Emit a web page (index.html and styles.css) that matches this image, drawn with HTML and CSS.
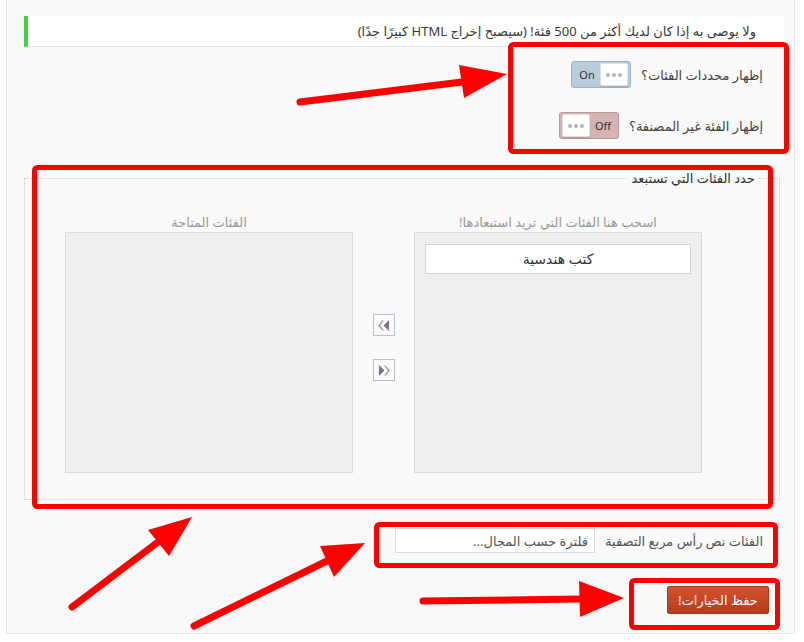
FILE: index.html
```html
<!DOCTYPE html>
<html lang="ar" dir="rtl">
<head>
    <meta charset="UTF-8">
    <meta name="viewport" content="width=device-width, initial-scale=1.0">
    <title>خيارات الفئات</title>
    <link rel="stylesheet" href="styles.css">
</head>
<body>
    <div class="panel">
        <div class="notice">ولا يوصى به إذا كان لديك أكثر من 500 فئة! (سيصبح إخراج HTML كبيرًا جدًا)</div>

        <div class="switches">
            <div class="switch-row">
                <label>إظهار محددات الفئات؟</label>
                <span class="toggle on"><span class="toggle-text">On</span><span class="knob"></span></span>
            </div>
            <div class="switch-row">
                <label>إظهار الفئة غير المصنفة؟</label>
                <span class="toggle off"><span class="knob"></span><span class="toggle-text">Off</span></span>
            </div>
        </div>

        <fieldset class="exclude">
            <legend>حدد الفئات التي تستبعد</legend>
            <div class="lists">
                <div class="list-title">اسحب هنا الفئات التي تريد استبعادها!</div>
                <div></div>
                <div class="list-title">الفئات المتاحة</div>

                <div class="list-box">
                    <div class="list-item">كتب هندسية</div>
                </div>
                <div class="movers">
                    <button class="mover" title="إضافة">
                        <svg width="12" height="11" viewBox="0 0 12 11">
                            <path d="M5.2 0.6 L1 5.5 L5.2 10.4" fill="none" stroke="#9d92aa" stroke-width="1.3"/>
                            <path d="M11 0 L5.6 5.5 L11 11 Z" fill="#7e718d"/>
                        </svg>
                    </button>
                    <button class="mover" title="إزالة">
                        <svg width="12" height="11" viewBox="0 0 12 11">
                            <path d="M1 0 L6.4 5.5 L1 11 Z" fill="#7e718d"/>
                            <path d="M6.8 0.6 L11 5.5 L6.8 10.4" fill="none" stroke="#9d92aa" stroke-width="1.3"/>
                        </svg>
                    </button>
                </div>
                <div class="list-box"></div>
            </div>
        </fieldset>

        <div class="filter-row">
            <label for="filter">الفئات نص رأس مربع التصفية</label>
            <input type="text" id="filter" placeholder="فلترة حسب المجال...">
        </div>

        <div class="actions">
            <button class="save">حفظ الخيارات!</button>
        </div>
    </div>

    <!-- red annotations drawn over the screenshot -->
    <svg class="annotations" width="804" height="642" viewBox="0 0 804 642">
        <g fill="none" stroke="#ff0000" stroke-width="5">
            <rect x="510.5" y="44.5" width="276" height="107" rx="3"/>
            <rect x="34.5" y="167.5" width="736" height="339" rx="3"/>
            <rect x="376.5" y="524.5" width="399" height="41" rx="3"/>
            <rect x="631.5" y="580.5" width="146" height="47" rx="3"/>
        </g>
        <g stroke="#ff0000" stroke-width="7" stroke-linecap="round">
            <line x1="300" y1="102" x2="462" y2="82"/>
            <line x1="72" y1="607" x2="158" y2="542"/>
            <line x1="194" y1="626" x2="327" y2="561"/>
            <line x1="423" y1="601" x2="580" y2="599"/>
        </g>
        <g fill="#ff0000">
            <polygon points="459,65 507,74 464,98"/>
            <polygon points="148,530 192,517 169,556"/>
            <polygon points="320,546 365,543 334,577"/>
            <polygon points="579,581 624,598 580,617"/>
        </g>
    </svg>
</body>
</html>
```

FILE: styles.css
```css
body {
    margin: 0;
    background-color: #ffffff;
    font-family: "Noto Sans", "DejaVu Sans", sans-serif;
    font-size: 13px;
    color: #444;
    position: relative;
}

.panel {
    height: 633px;
    margin: 0 9px 0 6px;
    background-color: #f9f9f9;
    border: 1px solid #e5e5e5;
    border-top: none;
    overflow: hidden;
}

.notice {
    margin: 16px 10px 0 17px;
    padding: 5px 28px 5px 0;
    line-height: 20px;
    background-color: #fff;
    border-left: 4px solid #41d13c;
    border-bottom: 1px solid #e2e2e2;
    color: #3a3a3a;
}

.switches {
    margin-top: 14px;
    padding-right: 31px;
}

.switch-row {
    display: flex;
    align-items: center;
    gap: 10px;
    height: 27px;
    margin-bottom: 24px;
}

.switch-row:last-child {
    margin-bottom: 0;
}

.switch-row label {
    color: #444;
}

.toggle {
    direction: ltr;
    display: flex;
    align-items: center;
    width: 60px;
    height: 27px;
    box-sizing: border-box;
    padding: 0 2px;
    border-radius: 3px;
    font-size: 11px;
    color: #333;
}

.toggle.on {
    background-color: #b7ccdc;
    border: 1px solid #9db2c4;
}

.toggle.off {
    background-color: #d6b2b2;
    border: 1px solid #bd9898;
}

.toggle-text {
    flex: 1;
    text-align: center;
}

.knob {
    position: relative;
    width: 26px;
    height: 21px;
    background-color: #fff;
    border: 1px solid #e2e2e2;
    border-radius: 2px;
    box-shadow: 0 1px 1px rgba(0, 0, 0, 0.15);
}

.knob::before {
    content: "";
    position: absolute;
    left: 11px;
    top: 9px;
    width: 4px;
    height: 4px;
    border-radius: 50%;
    background-color: #b5b5b5;
    box-shadow: 6px 0 #b5b5b5, -6px 0 #b5b5b5;
}

.exclude {
    margin: 30px 14px 0 17px;
    padding: 0 0 26px 0;
    border: 1px dotted #c9c9c9;
    min-width: 0;
}

.exclude legend {
    margin-right: 20px;
    padding: 0 4px;
    line-height: 19px;
    color: #333;
}

.lists {
    display: grid;
    grid-template-columns: 288px 61px 288px;
    margin-top: 25px;
    margin-right: 77px;
}

.list-title {
    text-align: center;
    line-height: 18px;
    margin-bottom: 1px;
    color: #999;
}

.list-box {
    height: 241px;
    box-sizing: border-box;
    padding: 11px 10px;
    background-color: #efefef;
    border: 1px solid #dcdcdc;
}

.list-item {
    height: 30px;
    line-height: 28px;
    box-sizing: border-box;
    text-align: center;
    font-size: 14px;
    color: #333;
    background-color: #fff;
    border: 1px solid #d2d2d2;
}

.movers {
    display: flex;
    flex-direction: column;
    align-items: center;
    justify-content: center;
    gap: 23px;
    padding-bottom: 10px;
}

.mover {
    width: 22px;
    height: 22px;
    padding: 0;
    display: flex;
    align-items: center;
    justify-content: center;
    background-color: #fafafa;
    border: 1px solid #b9c1cc;
    cursor: pointer;
}

.filter-row {
    display: flex;
    align-items: center;
    gap: 10px;
    margin-top: 28px;
    padding-right: 31px;
}

.filter-row label {
    color: #555;
}

.filter-row input {
    width: 200px;
    height: 25px;
    box-sizing: border-box;
    padding: 0 6px;
    border: 1px solid #dcdcdc;
    background-color: #fff;
    font-family: inherit;
    font-size: 13px;
}

.filter-row input::placeholder {
    color: #555;
}

.actions {
    margin-top: 33px;
    padding-right: 25px;
}

.save {
    width: 102px;
    height: 28px;
    background: linear-gradient(#d4532f, #b83b20);
    border: 1px solid #a9381e;
    border-radius: 2px;
    color: #fff;
    font-family: inherit;
    font-size: 13px;
    cursor: pointer;
}

.annotations {
    position: absolute;
    top: 0;
    left: 0;
    pointer-events: none;
}
```
